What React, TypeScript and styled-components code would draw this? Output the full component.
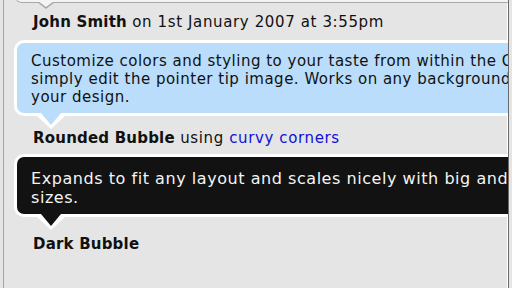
import styled, { createGlobalStyle } from "styled-components";

const GlobalStyle = createGlobalStyle`
  html, body {
    margin: 0;
    padding: 0;
    background: #e5e5e5;
  }
  body {
    font-family: "DejaVu Sans", Verdana, sans-serif;
    font-size: 15px;
    color: #111;
  }
`;

const Page = styled.div`
  margin-left: 3px;
  width: 506px;
  height: 288px;
  border-left: 1px solid #a3a3a3;
  border-right: 1px solid #6a6a6a;
  box-shadow: inset -1px 0 0 #ffffff;
  padding-left: 10px;
  overflow: hidden;
  box-sizing: border-box;
`;

const PlainBubble = styled.div`
  position: relative;
  width: 560px;
  height: 40px;
  margin-top: -39px;
  background: #f4f4f4;
  border: 1px solid #a8a8a8;
  border-radius: 8px;

  &::before,
  &::after {
    content: "";
    position: absolute;
    width: 0;
    height: 0;
  }
  &::before {
    left: 22px;
    top: 100%;
    border-left: 9px solid transparent;
    border-right: 9px solid transparent;
    border-top: 7px solid #a8a8a8;
  }
  &::after {
    left: 23px;
    top: calc(100% - 1px);
    border-left: 8px solid transparent;
    border-right: 8px solid transparent;
    border-top: 6px solid #f4f4f4;
  }
`;

const Bubble = styled.div<{ $fill: string; $ink: string }>`
  position: relative;
  width: 580px;
  background: ${(p) => p.$fill};
  color: ${(p) => p.$ink};
  border: 3px solid #ffffff;
  border-radius: 10px;
  line-height: 18px;
  white-space: nowrap;

  &::before,
  &::after {
    content: "";
    position: absolute;
    width: 0;
    height: 0;
  }
  &::before {
    left: 20px;
    top: calc(100% + 3px);
    border-left: 14px solid transparent;
    border-right: 14px solid transparent;
    border-top: 13px solid #ffffff;
  }
  &::after {
    left: 24px;
    top: 100%;
    border-left: 10px solid transparent;
    border-right: 10px solid transparent;
    border-top: 12px solid ${(p) => p.$fill};
  }
`;

const BlueBubble = styled(Bubble)`
  margin-top: 9px;
  padding: 9px 14px 7px;
  letter-spacing: 0.5px;
`;

const DarkBubble = styled(Bubble)`
  margin-top: 7px;
  padding: 12px 14px 7px;
  font-size: 16px;
  line-height: 19px;
  letter-spacing: 0.55px;
`;

const Meta = styled.div<{ $gap: number }>`
  margin: ${(p) => p.$gap}px 0 0 19px;
  line-height: 18px;
  white-space: nowrap;
  letter-spacing: 0.62px;

  b {
    font-weight: bold;
    letter-spacing: 0.2px;
  }
  a {
    color: #1010d8;
    text-decoration: none;
  }
`;

const BubbleText = styled.p`
  margin: 0;
`;

export default function App() {
  return (
    <>
      <GlobalStyle />
      <Page>
        <PlainBubble />
        <Meta $gap={10}>
          <b>John Smith</b> on 1st January 2007 at 3:55pm
        </Meta>
        <BlueBubble $fill="#b9ddfa" $ink="#111">
          <BubbleText>
            Customize colors and styling to your taste from within the CSS or
            <br />
            simply edit the pointer tip image. Works on any background color in
            <br />
            your design.
          </BubbleText>
        </BlueBubble>
        <Meta $gap={13}>
          <b>Rounded Bubble</b> using <a href="#">curvy corners</a>
        </Meta>
        <DarkBubble $fill="#121212" $ink="#f4f4f4">
          <BubbleText>
            Expands to fit any layout and scales nicely with big and small font
            <br />
            sizes.
          </BubbleText>
        </DarkBubble>
        <Meta $gap={18}>
          <b>Dark Bubble</b>
        </Meta>
      </Page>
    </>
  );
}
